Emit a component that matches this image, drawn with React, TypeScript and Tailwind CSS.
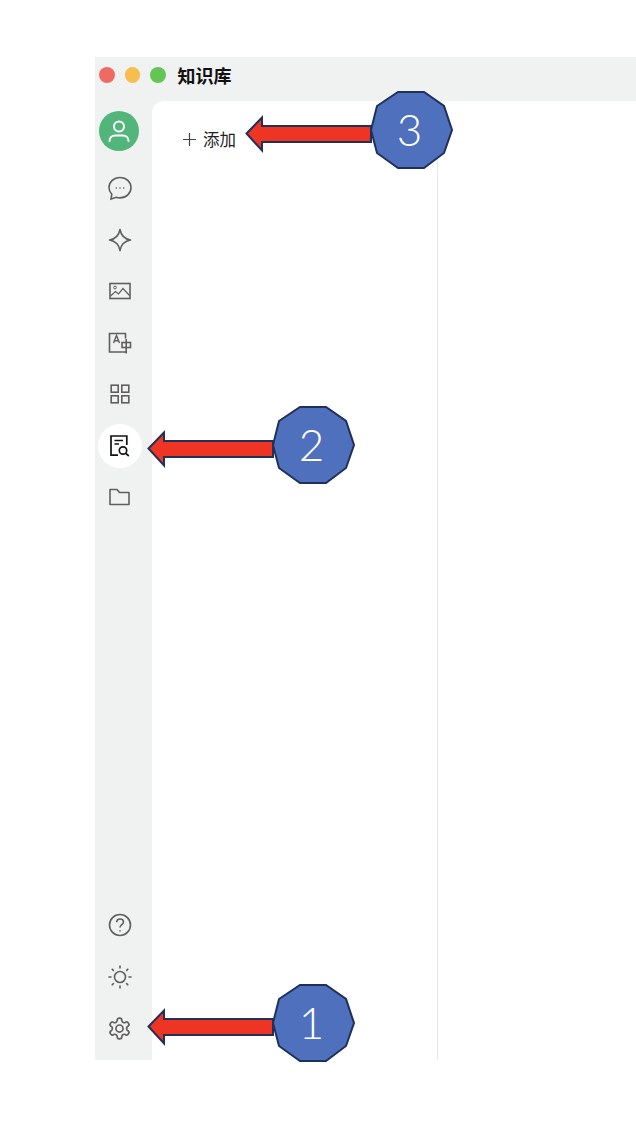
import React from 'react';

const iconClass = 'fill-none stroke-[#5f5f5f] stroke-[1.6]';

const ChatIcon = () => (
  <svg width="26" height="26" viewBox="0 0 26 26" className={iconClass}>
    <path d="M13 2.500C6.900 2.500 2 7 2 12.500c0 2.600 1 4.900 2.800 6.700L4 24l5.200-1.700c1.200.4 2.500.6 3.800.6 6.100 0 11-4.600 11-10.400S19.100 2.500 13 2.500z" />
    <path d="M8.700 13h1.200M12.400 13h1.200M16.100 13h1.200" />
  </svg>
);

const SparkIcon = () => (
  <svg width="24" height="24" viewBox="0 0 24 24" className={iconClass}>
    <path d="M12 1.500C13 7 16.500 11 22.500 12 16.500 13 13 17 12 22.500 11 17 7.500 13 1.500 12 7.500 11 11 7 12 1.500z" strokeLinejoin="round" />
  </svg>
);

const ImageIcon = () => (
  <svg width="22" height="18" viewBox="0 0 22 18" className={iconClass}>
    <rect x="1" y="1.500" width="20" height="15" />
    <circle cx="6" cy="5.500" r="1.400" className="stroke-1" />
    <path d="M1.500 14l5-4.500 3 2.500 4.500-5.500 6.500 7" className="stroke-[1.2]" />
  </svg>
);

const TranslateIcon = () => (
  <svg width="24" height="22" viewBox="0 0 24 22" className={iconClass}>
    <path d="M18 1.500H1.500v18.500H18" />
    <path d="M17.500 1.500v5" />
    <path d="M5.500 11L8.500 3.500 11.500 11M6.500 8.700h4" className="stroke-[1.4]" />
    <rect x="14" y="10.500" width="8.500" height="5" />
    <path d="M18.200 7v14.500" />
  </svg>
);

const GridIcon = () => (
  <svg width="20" height="20" viewBox="0 0 20 20" className={iconClass}>
    <rect x="1.200" y="1.200" width="7" height="7" />
    <rect x="11.800" y="1.200" width="7" height="7" />
    <rect x="1.200" y="11.800" width="7" height="7" />
    <rect x="11.800" y="11.800" width="7" height="7" />
  </svg>
);

const KnowledgeIcon = () => (
  <svg width="20" height="22" viewBox="0 0 20 22" className="fill-none stroke-[#111] stroke-[1.7]">
    <path d="M8 20.200H1V1h15.800v9" />
    <path d="M4.500 5.500h8.500M4.500 9h4.500" />
    <circle cx="13" cy="15.500" r="3.700" />
    <path d="M15.800 18.300L18.800 21" />
  </svg>
);

const FolderIcon = () => (
  <svg width="21" height="18" viewBox="0 0 21 18" className={iconClass}>
    <path d="M1 16.500V1.500h7l2.500 3H20v12z" strokeLinejoin="round" />
  </svg>
);

const HelpIcon = () => (
  <svg width="24" height="24" viewBox="0 0 24 24" className={iconClass}>
    <circle cx="12" cy="12" r="10.500" />
    <path d="M8.700 9.300c0-2 1.500-3.300 3.400-3.300s3.400 1.300 3.400 3c0 2.700-3.500 2.700-3.500 5.500" />
    <path d="M12 17.200v1.300" />
  </svg>
);

const SunIcon = () => (
  <svg width="24" height="24" viewBox="0 0 24 24" className={iconClass}>
    <circle cx="12" cy="12" r="5.500" />
    <path d="M12 1v2M12 21v2M1 12h2M21 12h2M4.200 4.200l1.200 1.200M18.600 18.600l1.200 1.200M4.200 19.800l1.200-1.200M18.600 5.400l1.200-1.200" strokeLinecap="round" />
  </svg>
);

const GearIcon = () => (
  <svg width="25" height="25" viewBox="0 0 24 24" className={iconClass}>
    <path d="M12.220 2h-.44a2 2 0 0 0-2 2v.18a2 2 0 0 1-1 1.730l-.43.250a2 2 0 0 1-2 0l-.15-.080a2 2 0 0 0-2.730.730l-.22.380a2 2 0 0 0 .730 2.730l.15.100a2 2 0 0 1 1 1.720v.510a2 2 0 0 1-1 1.740l-.15.090a2 2 0 0 0-.730 2.730l.22.380a2 2 0 0 0 2.730.730l.15-.080a2 2 0 0 1 2 0l.43.250a2 2 0 0 1 1 1.730V20a2 2 0 0 0 2 2h.44a2 2 0 0 0 2-2v-.18a2 2 0 0 1 1-1.730l.43-.250a2 2 0 0 1 2 0l.15.080a2 2 0 0 0 2.730-.730l.22-.390a2 2 0 0 0-.730-2.730l-.15-.080a2 2 0 0 1-1-1.740v-.5a2 2 0 0 1 1-1.740l.15-.090a2 2 0 0 0 .730-2.730l-.22-.380a2 2 0 0 0-2.730-.730l-.15.080a2 2 0 0 1-2 0l-.43-.250a2 2 0 0 1-1-1.730V4a2 2 0 0 0-2-2z" />
    <circle cx="12" cy="12" r="3.400" />
  </svg>
);

const NavItem: React.FC<{ active?: boolean; children: React.ReactNode }> = ({ active, children }) => (
  <button className={`w-11 h-11 shrink-0 rounded-full flex items-center justify-center pr-px ${active ? 'bg-white' : ''}`}>
    {children}
  </button>
);

// red arrow + numbered decagon laid over the screenshot
const Callout: React.FC<{ n: number; className: string }> = ({ n, className }) => (
  <div className={`absolute w-[208px] h-[78px] ${className}`}>
    <svg width="208" height="78" viewBox="0 0 208 78" className="stroke-[#1f3158] stroke-2">
      <polygon points="153,1 179,1 199,15 207,39 199,62 179,77 153,77 132,62 126,39 132,15" className="fill-[#4f71bd]" />
      <polygon points="1.500,42.500 17,26.500 17,35 126,35 126,51 17,51 17,59.500" className="fill-[#ee3524]" />
    </svg>
    <span className="absolute left-[123px] top-[-1px] w-[83px] h-[78px] flex items-center justify-center text-white text-[44px] font-light font-['Lato',sans-serif]">
      {n}
    </span>
  </div>
);

export default function App() {
  return (
    <div className="relative h-[1126px] w-[636px] overflow-hidden bg-white pt-[57px] pl-[95px] font-['Noto_Sans_CJK_SC','Noto_Sans',sans-serif]">
      <div className="h-[1003px] flex flex-col bg-[#f0f2f1]">
        <div className="h-11 shrink-0 flex items-center pl-1 pb-2">
          <div className="flex items-center gap-[10px]">
            <span className="w-[15.500px] h-[15.500px] rounded-full bg-[#ee6b62]" />
            <span className="w-[15.500px] h-[15.500px] rounded-full bg-[#f6bd4f]" />
            <span className="w-[15.500px] h-[15.500px] rounded-full bg-[#62c554]" />
          </div>
          <span className="ml-3 text-[18px] font-bold text-[#111]">知识库</span>
        </div>
        <div className="flex-1 flex min-h-0">
          <div className="w-[57px] shrink-0 flex flex-col items-start pl-[3px] pt-[10px] pb-[10px]">
            <div className="w-10 h-10 ml-px mb-[15px] rounded-full bg-[#52b67a] flex items-center justify-center">
              <svg width="24" height="24" viewBox="0 0 24 24" className="fill-none stroke-white stroke-2">
                <circle cx="12" cy="7.500" r="5" />
                <path d="M2.500 22c0-3.500 2.500-5.500 5.500-5.500h8c3 0 5.500 2 5.500 5.500" strokeLinecap="round" />
              </svg>
            </div>
            <div className="flex flex-col gap-[7.500px]">
              <NavItem><ChatIcon /></NavItem>
              <NavItem><SparkIcon /></NavItem>
              <NavItem><ImageIcon /></NavItem>
              <NavItem><TranslateIcon /></NavItem>
              <NavItem><GridIcon /></NavItem>
              <NavItem active><KnowledgeIcon /></NavItem>
              <NavItem><FolderIcon /></NavItem>
            </div>
            <div className="mt-auto flex flex-col gap-[7.500px]">
              <NavItem><HelpIcon /></NavItem>
              <NavItem><SunIcon /></NavItem>
              <NavItem><GearIcon /></NavItem>
            </div>
          </div>
          <div className="flex-1 flex bg-white rounded-tl-xl">
            <div className="w-[286px] shrink-0 border-r border-[#e6e8e8] pl-[31px] pt-[26px]">
              <button className="flex items-center gap-[7px] text-[16.500px] text-[#222] leading-6">
                <svg width="13" height="13" viewBox="0 0 13 13" className="fill-none stroke-[#444] stroke-[1.2]">
                  <path d="M6.500 0v13M0 6.500h13" />
                </svg>
                添加
              </button>
            </div>
            <div className="flex-1" />
          </div>
        </div>
      </div>
      <Callout n={3} className="left-[245px] top-[91px]" />
      <Callout n={2} className="left-[147px] top-[406px]" />
      <Callout n={1} className="left-[147px] top-[984px]" />
    </div>
  );
}
